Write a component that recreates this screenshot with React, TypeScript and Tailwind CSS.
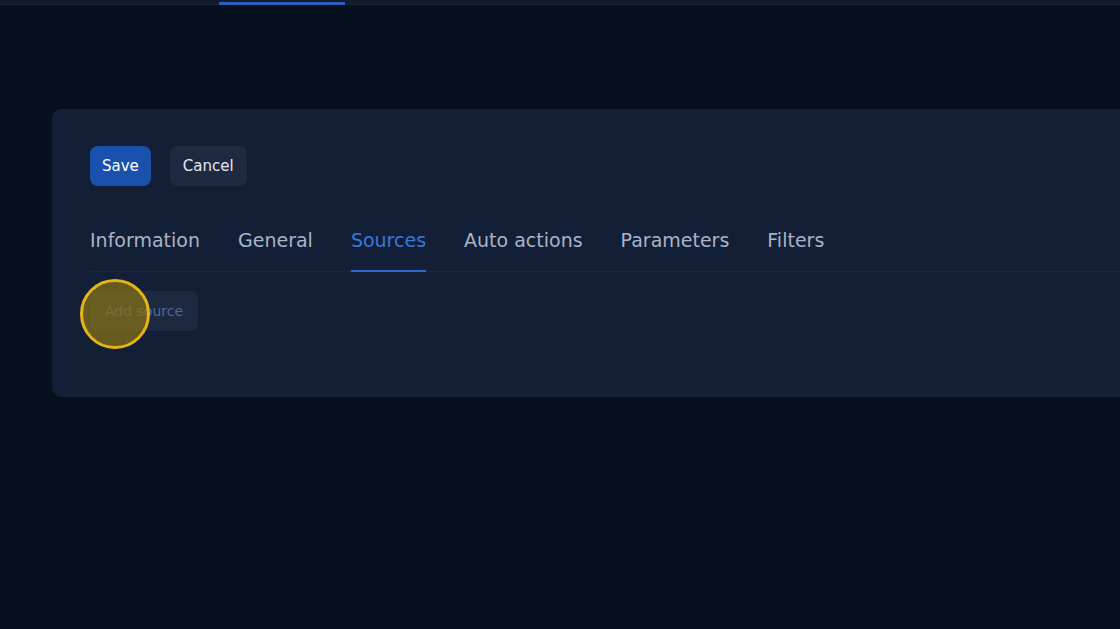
import React from "react";

const tabs = ["Information", "General", "Sources", "Auto actions", "Parameters", "Filters"];

export default function App() {
  return (
    <div
      className="w-[1120px] h-[629px] overflow-hidden bg-[#07101f] flex flex-col"
      style={{ fontFamily: '"DejaVu Sans", "Open Sans", sans-serif' }}
    >
      <div className="h-[5px] bg-[#111b2e] border-b border-[#1a2336] flex shrink-0">
        <div className="w-[219px]" />
        <div className="w-[126px] h-[3px] mt-[2px] bg-[#2c5fc0]" />
      </div>
      <div className="flex-1 pl-[52px] pt-[104px]">
        <div className="h-[288px] -mr-[20px] bg-[#131f36] rounded-[9px] pl-[38px] pt-[37px]">
          <div className="flex gap-[19px]">
            <button className="h-[40px] px-[12px] rounded-[8px] bg-[#1a51ad] text-white text-[15px]">Save</button>
            <button className="h-[40px] px-[13px] rounded-[8px] bg-[#1f2a42] text-[#e4e8f0] text-[15px]">Cancel</button>
          </div>
          <div className="mt-[43px] flex gap-[38px] border-b border-[#1e283a]">
            {tabs.map((t) => (
              <div
                key={t}
                className={
                  "pb-[19px] text-[19px] leading-[22px] border-b-2 -mb-px " +
                  (t === "Sources" ? "text-[#3a78de] border-[#2f67cf]" : "text-[#a9b4c6] border-transparent")
                }
              >
                {t}
              </div>
            ))}
          </div>
          <div className="mt-[19px] relative w-fit">
            <button className="h-[40px] px-[15px] rounded-[8px] bg-[#1c2941] text-[#4d6893] text-[14px]">Add source</button>
            <div className="absolute left-[-10px] top-[-12px] w-[70px] h-[70px] rounded-full border-[3px] border-[#e5b515] bg-[#8a7415]/70" />
          </div>
        </div>
      </div>
    </div>
  );
}
